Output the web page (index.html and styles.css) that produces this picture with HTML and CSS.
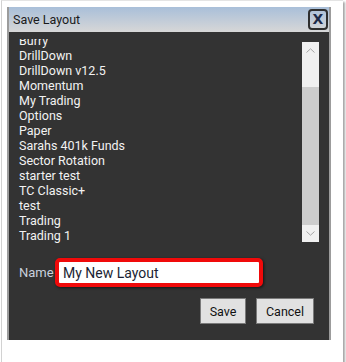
FILE: index.html
```html
<!DOCTYPE html>
<html lang="en">
<head>
  <meta charset="UTF-8">
  <title>Save Layout</title>
  <link rel="stylesheet" href="styles.css">
</head>
<body>
  <div class="frame">
    <div class="dialog">
      <div class="titlebar">
        <span class="title">Save Layout</span>
        <span class="close">X</span>
      </div>
      <div class="content">
        <div class="listbox">
          <div class="items">
            <ul>
              <li>Burry</li>
              <li>DrillDown</li>
              <li>DrillDown v12.5</li>
              <li>Momentum</li>
              <li>My Trading</li>
              <li>Options</li>
              <li>Paper</li>
              <li>Sarahs 401k Funds</li>
              <li>Sector Rotation</li>
              <li>starter test</li>
              <li>TC Classic+</li>
              <li>test</li>
              <li>Trading</li>
              <li>Trading 1</li>
            </ul>
          </div>
          <div class="scrollbar">
            <div class="arrow">
              <svg width="9" height="5" viewBox="0 0 9 5"><path d="M0.5 4.5 L4.5 0.8 L8.5 4.5" fill="none" stroke="#a6a6a6" stroke-width="1"/></svg>
            </div>
            <div class="thumb"></div>
            <div class="track"></div>
            <div class="arrow">
              <svg width="9" height="5" viewBox="0 0 9 5"><path d="M0.5 0.5 L4.5 4.2 L8.5 0.5" fill="none" stroke="#a6a6a6" stroke-width="1"/></svg>
            </div>
          </div>
        </div>

        <div class="name-row">
          <label for="layout_name">Name</label>
          <span class="highlight"><input type="text" id="layout_name" value="My New Layout"></span>
        </div>

        <div class="buttons">
          <button class="btn-save">Save</button>
          <button class="btn-cancel">Cancel</button>
        </div>
      </div>
    </div>
  </div>
</body>
</html>
```

FILE: styles.css
```css
body {
  margin: 0;
  background: white;
  font-family: Roboto, "Noto Sans", sans-serif;
}

.frame {
  width: 341px;
  height: 355px;
  margin-left: 1px;
  border-top: 1px solid #e4e4e4;
  border-left: 1px solid #d2d2d2;
  background: white;
  box-shadow: 2px 2px 2px rgba(0, 0, 0, 0.35);
  padding-top: 6px;
}

.dialog {
  width: 320px;
  margin-left: 5px;
  border-left: 2px solid #9c9c9c;
  border-right: 2px solid #9c9c9c;
}

.titlebar {
  height: 25px;
  display: flex;
  align-items: center;
  justify-content: space-between;
  padding: 0 1px 0 4px;
  background: linear-gradient(#a9bfd9, #d7d7d7);
}

.title {
  font-size: 12.5px;
  color: #1a1a1a;
}

.close {
  width: 16px;
  height: 17px;
  border: 2px solid #2e2e2e;
  border-radius: 4px;
  font-family: "DejaVu Sans", sans-serif;
  font-weight: bold;
  font-size: 14px;
  line-height: 17px;
  text-align: center;
  color: #1d2a48;
}

.content {
  background: #333333;
  height: 308px;
  padding-top: 7px;
  box-sizing: border-box;
}

.listbox {
  display: flex;
  height: 208px;
}

.items {
  flex: 1;
  overflow: hidden;
  padding-left: 10px;
}

.items ul {
  list-style: none;
  margin: -6.5px 0 0 0;
  padding: 0;
}

.items li {
  font-size: 12.5px;
  line-height: 15px;
  color: #f2f2f2;
  white-space: nowrap;
}

.scrollbar {
  width: 17px;
  margin: 3px 10px 5px 0;
  display: flex;
  flex-direction: column;
  background: #cdcdcd;
}

.arrow {
  height: 17px;
  background: #f0f0f0;
  display: flex;
  align-items: center;
  justify-content: center;
}

.thumb {
  height: 28px;
  background: #f0f0f0;
}

.track {
  flex: 1;
}

.name-row {
  display: flex;
  align-items: center;
  margin-top: 11px;
  padding-left: 10px;
}

.name-row label {
  font-size: 13px;
  color: #c9d0dc;
  width: 36px;
}

.highlight {
  display: inline-block;
  border: 4px solid #f00a0a;
  border-radius: 5px;
  padding: 1px;
  background: white;
  box-shadow: 1px 1px 3px rgba(0, 0, 0, 0.6);
}

.highlight input {
  display: block;
  width: 195px;
  height: 19px;
  padding: 0 0 0 3px;
  border: none;
  outline: none;
  font-family: Roboto, sans-serif;
  font-size: 14px;
  color: #1b1f33;
}

.buttons {
  display: flex;
  justify-content: flex-end;
  gap: 10px;
  margin-top: 11px;
  padding-right: 15px;
}

button {
  height: 26px;
  padding: 0;
  background: #e1e1e1;
  border: 1px solid #7a7a7a;
  font-family: Roboto, sans-serif;
  font-size: 12.5px;
  color: #111;
}

.btn-save {
  width: 46px;
}

.btn-cancel {
  width: 58px;
}
```
